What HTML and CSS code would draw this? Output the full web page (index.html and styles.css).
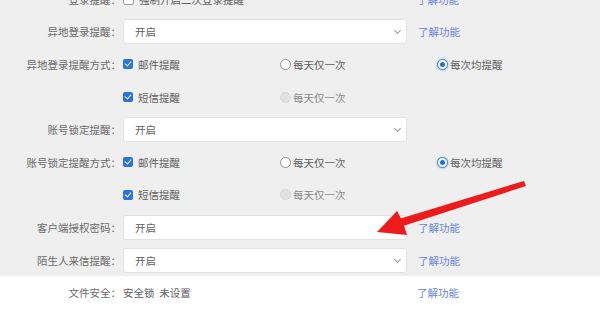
FILE: index.html
```html
<!DOCTYPE html>
<html lang="zh-CN">
<head>
    <meta charset="UTF-8">
    <title>安全设置</title>
    <link rel="stylesheet" href="styles.css">
</head>
<body>

    <div class="page">
        <div class="panel">
            <div class="row">
                <div class="label">登录提醒：</div>
                <div class="field">
                    <span class="check off"></span><span class="opt-text">强制开启二次登录提醒</span>
                </div>
                <a class="more">了解功能</a>
            </div>

            <div class="row">
                <div class="label">异地登录提醒：</div>
                <div class="select">开启<span class="chev"></span></div>
                <a class="more">了解功能</a>
            </div>

            <div class="row">
                <div class="label">异地登录提醒方式：</div>
                <div class="opts">
                    <span class="opt"><span class="check"></span>邮件提醒</span>
                    <span class="opt"><span class="radio"></span>每天仅一次</span>
                    <span class="opt"><span class="radio on"></span>每次均提醒</span>
                </div>
            </div>

            <div class="row">
                <div class="label"></div>
                <div class="opts">
                    <span class="opt"><span class="check"></span>短信提醒</span>
                    <span class="opt muted"><span class="radio dis"></span>每天仅一次</span>
                </div>
            </div>

            <div class="row">
                <div class="label">账号锁定提醒：</div>
                <div class="select">开启<span class="chev"></span></div>
            </div>

            <div class="row">
                <div class="label">账号锁定提醒方式：</div>
                <div class="opts">
                    <span class="opt"><span class="check"></span>邮件提醒</span>
                    <span class="opt"><span class="radio"></span>每天仅一次</span>
                    <span class="opt"><span class="radio on"></span>每次均提醒</span>
                </div>
            </div>

            <div class="row">
                <div class="label"></div>
                <div class="opts">
                    <span class="opt"><span class="check"></span>短信提醒</span>
                    <span class="opt muted"><span class="radio dis"></span>每天仅一次</span>
                </div>
            </div>

            <div class="row">
                <div class="label">客户端授权密码：</div>
                <div class="select">开启</div>
                <a class="more">了解功能</a>
            </div>

            <div class="row">
                <div class="label">陌生人来信提醒：</div>
                <div class="select">开启<span class="chev"></span></div>
                <a class="more">了解功能</a>
            </div>
        </div>

        <div class="row plain">
            <div class="label">文件安全：</div>
            <div class="field">安全锁&nbsp;&nbsp;未设置</div>
            <a class="more">了解功能</a>
        </div>
    </div>

    <!-- red annotation arrow -->
    <svg class="arrow" width="600" height="325" viewBox="0 0 600 325">
        <polygon fill="#ec1c1c" points="524,181 526,186 403,226 399,219"/>
        <polygon fill="#ec1c1c" points="377,232 397,211 403,222 407,235"/>
    </svg>

</body>
</html>
```

FILE: styles.css
```css
body {
    margin: 0;
    background: #ffffff;
    font-family: "Noto Sans CJK SC", "Noto Sans", sans-serif;
    font-size: 10.5px;
    color: #5e5e5e;
    overflow: hidden;
}

.page {
    margin-top: -17px;
}

.panel {
    background: #efefef;
}

.row {
    display: flex;
    align-items: center;
    height: 32.6px;
}

.label {
    width: 121px;
    flex-shrink: 0;
    text-align: right;
    color: #6a6a6a;
    padding-right: 2px;
}

.field {
    width: 283px;
    display: flex;
    align-items: center;
}

.select {
    width: 271px;
    height: 23px;
    background: #ffffff;
    border: 1px solid #e2e2e2;
    border-radius: 3px;
    padding-left: 11px;
    display: flex;
    align-items: center;
    position: relative;
    color: #5e5e5e;
}

.chev {
    position: absolute;
    right: 6px;
    top: 8px;
    width: 4px;
    height: 4px;
    border-right: 1px solid #9a9a9a;
    border-bottom: 1px solid #9a9a9a;
    transform: rotate(45deg);
}

.more {
    margin-left: 11px;
    color: #6783e3;
    cursor: pointer;
}

.opts {
    display: flex;
    align-items: center;
}

.opt {
    display: flex;
    align-items: center;
    width: 157px;
}

.opt.muted {
    color: #8a8a8a;
}

.check {
    width: 10px;
    height: 10px;
    border-radius: 2px;
    background: #2a72e0;
    margin-right: 5px;
    position: relative;
    flex-shrink: 0;
}

.check::after {
    content: "";
    position: absolute;
    left: 3px;
    top: 1px;
    width: 3px;
    height: 5px;
    border-right: 1.5px solid #ffffff;
    border-bottom: 1.5px solid #ffffff;
    transform: rotate(40deg);
}

.check.off {
    background: #ffffff;
    border: 1px solid #9a9a9a;
    width: 9px;
    height: 9px;
}

.check.off::after {
    display: none;
}

.opt-text {
    color: #5e5e5e;
}

.radio {
    width: 9px;
    height: 9px;
    border-radius: 50%;
    border: 1px solid #8e8e8e;
    background: #ffffff;
    margin-right: 2px;
    position: relative;
    flex-shrink: 0;
}

.radio.on {
    border-color: #3b7ff0;
    box-shadow: 0 0 2px rgba(59, 127, 240, 0.7);
}

.radio.on::after {
    content: "";
    position: absolute;
    left: 2px;
    top: 2px;
    width: 5px;
    height: 5px;
    border-radius: 50%;
    background: #1f6fe8;
}

.radio.dis {
    background: #e2e2e2;
    border-color: #d6d6d6;
}

.arrow {
    position: absolute;
    left: 0;
    top: 0;
    pointer-events: none;
}
```
